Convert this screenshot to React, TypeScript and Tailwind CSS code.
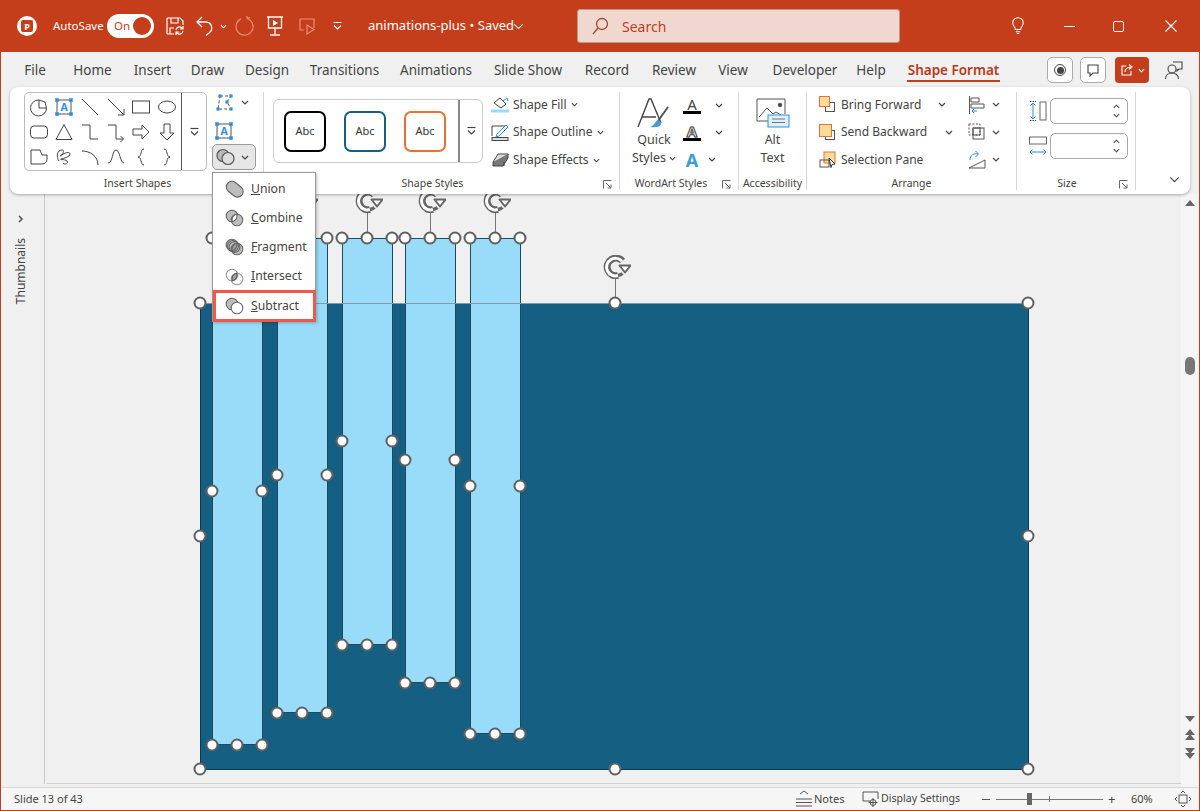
import React from "react";

const S = "#444";
const BL = "#2f8fdc";

function Ic({ w = 20, h = 20, vb, children, className = "" }: { w?: number; h?: number; vb?: string; children: React.ReactNode; className?: string }) {
  return (
    <svg width={w} height={h} viewBox={vb ?? `0 0 ${w} ${h}`} fill="none" stroke={S} strokeWidth={1} className={"shrink-0 " + className}>
      {children}
    </svg>
  );
}

function Chev({ color = "#444", up = false, size = 8 }: { color?: string; up?: boolean; size?: number }) {
  return (
    <svg width={size} height={size > 10 ? 7 : 5} viewBox="0 0 8 5" fill="none" stroke={color} strokeWidth={size > 10 ? 0.8 : 1.2} className="shrink-0">
      <path d={up ? "M1 4l3-3 3 3" : "M1 1l3 3 3-3"} />
    </svg>
  );
}

function GalleryMore() {
  return (
    <svg width={11} height={10} viewBox="0 0 11 10" fill="none" stroke="#444" strokeWidth={1.2}>
      <path d="M1.5 1.5h8" />
      <path d="M2 4.5l3.5 3.5 3.5-3.5" />
    </svg>
  );
}

function Launcher() {
  return (
    <svg width={9} height={9} viewBox="0 0 9 9" fill="none" stroke="#666" strokeWidth={1}>
      <path d="M.5 8.5v-8h8" />
      <path d="M3 3l5 5M8 4.5V8H4.5" />
    </svg>
  );
}

function TextBoxIc({ size = 18 }: { size?: number }) {
  return (
    <svg width={size} height={size} viewBox="0 0 18 18" fill="none" className="shrink-0">
      <rect x="2" y="2" width="14" height="14" stroke="#555" />
      {[[2, 2], [16, 2], [2, 16], [16, 16]].map(([x, y], i) => (
        <rect key={i} x={x - 1.8} y={y - 1.8} width="3.6" height="3.6" fill={BL} />
      ))}
      <text x="9" y="13" textAnchor="middle" fontSize="10.5" fontWeight="700" fill={BL} stroke="none" fontFamily="'Open Sans',sans-serif">A</text>
    </svg>
  );
}

const shapeIcons: React.ReactNode[] = [
  <Ic key="1"><path d="M10 3v8h7.5A8 8 0 1 1 10 3z" /><path d="M10 3l6 2 1.500 6" /></Ic>,
  <TextBoxIc key="2" />,
  <Ic key="3"><path d="M2 2l16 16" /></Ic>,
  <Ic key="4"><path d="M2 2l16 16M18 12v6h-6" /></Ic>,
  <Ic key="5"><rect x="1.5" y="4" width="17" height="12" /></Ic>,
  <Ic key="6"><ellipse cx="10" cy="10" rx="8.5" ry="6" /></Ic>,
  <Ic key="7"><rect x="1.5" y="4" width="17" height="12" rx="3.5" /></Ic>,
  <Ic key="8"><path d="M10 2.5l8 15H2z" /></Ic>,
  <Ic key="9"><path d="M2 3h8v14h8" /></Ic>,
  <Ic key="10"><path d="M2 3h8v14h7M14.5 14l3 3-3 3" /></Ic>,
  <Ic key="11"><path d="M2 7h9V3l7 7-7 7v-4H2z" /></Ic>,
  <Ic key="12"><path d="M7 2h6v9h4l-7 7-7-7h4z" /></Ic>,
  <Ic key="13"><path d="M2 17V3h9l2 5h5v4c0 3-2 5-5 5z" strokeLinejoin="round" /></Ic>,
  <Ic key="14"><path d="M5 14C2 10 3 3 8 3c3 0 1 5-2 6 4-3 10-5 10-2 0 3-6 4-9 5-2 1 4 0 6 2 2 3-3 4-4 2" /></Ic>,
  <Ic key="15"><path d="M2 4c8 0 16 5 16 14" /></Ic>,
  <Ic key="16"><path d="M2 16c5 0 4-13 8-13 4 0 4 13 8 13" /></Ic>,
  <Ic key="17"><path d="M13 2c-4 0-2 8-6 8 4 0 2 8 6 8" /></Ic>,
  <Ic key="18"><path d="M7 2c4 0 2 8 6 8-4 0-2 8-6 8" /></Ic>,
];

function MergeIc() {
  return (
    <svg width={20} height={18} viewBox="0 0 20 18" fill="none" stroke="#555" strokeWidth={1.2} className="shrink-0">
      <circle cx="7" cy="7.5" r="6" fill="#bbb" />
      <circle cx="12" cy="10.5" r="6" fill="#ddd" />
    </svg>
  );
}

function MenuIc({ kind }: { kind: string }) {
  const a = { cx: 7, cy: 7, r: 5.8 };
  const b = { cx: 12, cy: 11, r: 5.8 };
  return (
    <svg width={20} height={18} viewBox="0 0 20 18" fill="none" stroke="#666" strokeWidth={1.1} className="shrink-0">
      {kind === "Union" && <path d="M3 3a5.6 5.6 0 0 1 8 0l5.5 4.5a5.6 5.6 0 0 1-8 8L3 11a5.6 5.6 0 0 1 0-8z" fill="#bdbdbd" />}
      {kind === "Combine" && (<><circle {...a} fill="#bdbdbd" /><circle {...b} fill="#bdbdbd" /><path d="M7.2 12.7a5.8 5.8 0 0 1 4.6-7.4 5.8 5.8 0 0 1-4.6 7.4z" fill="#fff" /></>)}
      {kind === "Fragment" && (<><circle {...a} fill="#bdbdbd" /><circle {...b} fill="#bdbdbd" /><circle cx="9.5" cy="9" r="5.4" /><circle cx="8" cy="8" r="5.5" /><path d="M7.2 12.7a5.8 5.8 0 0 1 4.6-7.4 5.8 5.8 0 0 1-4.6 7.4z" fill="#999" /></>)}
      {kind === "Intersect" && (<><circle {...a} stroke="#999" /><circle {...b} stroke="#999" /><path d="M7.2 12.7a5.8 5.8 0 0 1 4.6-7.4 5.8 5.8 0 0 1-4.6 7.4z" fill="#aaa" stroke="#555" /></>)}
      {kind === "Subtract" && (<><circle {...a} fill="#bdbdbd" /><circle {...b} fill="#fff" /></>)}
    </svg>
  );
}

function Rotate() {
  return (
    <svg width={28} height={24} viewBox="0 0 28 24" fill="none">
      <path d="M19.500 6A8.800 8.800 0 1 0 15 20.500" stroke="#666" strokeWidth={7} />
      <path d="M19 6.300A8.800 8.800 0 1 0 15 20.500" stroke="#fff" strokeWidth={3} />
      <path d="M16.500 10.500h11L22 17.500z" fill="#fff" stroke="#666" strokeWidth={2} strokeLinejoin="round" />
      <path d="M15 20.500a9 9 0 0 0 4.500-2" stroke="#666" strokeWidth={3.500} />
    </svg>
  );
}

function Handle({ x, y }: { x: number; y: number }) {
  return <div className="absolute w-[13px] h-[13px] rounded-full bg-white border-2 border-[#5f5f5f] -translate-x-1/2 -translate-y-1/2" style={{ left: x - 0.5, top: y - 0.5 }} />;
}

const bars = [
  { l: 212, b: 745, m: 491 },
  { l: 277, b: 713, m: 475 },
  { l: 342, b: 645, m: 441 },
  { l: 405, b: 683, m: 460 },
  { l: 470, b: 734, m: 486 },
];

function Canvas() {
  return (
    <div className="absolute left-[-1px] top-[-194px] w-[1200px] h-[811px]">
      <div className="absolute left-[200px] top-[303px] w-[829px] h-[467px] bg-[#156082] border border-[#0d3a4e]" />
      {bars.map((b) => (
        <div
          key={b.l}
          className="absolute w-[51px] bg-[#99dcfa] border border-[#1d4a5e] rounded-[7px]"
          style={{ left: b.l, top: 238, height: b.b - 238 }}
        />
      ))}
      <div className="absolute left-[200px] top-[303px] w-[828px] h-px bg-[#7f9aa6]" />
      {bars.map((b) => (
        <React.Fragment key={b.l}>
          <div className="absolute w-px bg-[#777] h-[30px]" style={{ left: b.l + 25, top: 208 }} />
          <div className="absolute" style={{ left: b.l + 13, top: 189 }}><Rotate /></div>
          {[b.l, b.l + 25, b.l + 50].map((x) => (
            <Handle key={x} x={x} y={238} />
          ))}
          <Handle x={b.l} y={b.m} />
          <Handle x={b.l + 50} y={b.m} />
          {[b.l, b.l + 25, b.l + 50].map((x) => (
            <Handle key={x} x={x} y={b.b} />
          ))}
        </React.Fragment>
      ))}
      <div className="absolute left-[615px] top-[277px] w-px h-[26px] bg-[#777]" />
      <div className="absolute left-[603px] top-[255px]"><Rotate /></div>
      {[200, 615, 1028].map((x) => <Handle key={x} x={x} y={303} />)}
      {[200, 1028].map((x) => <Handle key={x} x={x} y={536} />)}
      {[200, 615, 1028].map((x) => <Handle key={x} x={x} y={769} />)}
    </div>
  );
}

const tabs: [string, string][] = [
  ["File", "ml-[23px] w-[22px]"],
  ["Home", "ml-[27px] w-[39px]"],
  ["Insert", "ml-[22px] w-[37px]"],
  ["Draw", "ml-[20px] w-[33px]"],
  ["Design", "ml-[21px] w-[44px]"],
  ["Transitions", "ml-[20px] w-[71px]"],
  ["Animations", "ml-[19px] w-[74px]"],
  ["Slide Show", "ml-[19px] w-[72px]"],
  ["Record", "ml-[20px] w-[46px]"],
  ["Review", "ml-[21px] w-[46px]"],
  ["View", "ml-[20px] w-[32px]"],
  ["Developer", "ml-[20px] w-[72px]"],
  ["Help", "ml-[15px] w-[30px]"],
];

function Row({ children, className = "" }: { children: React.ReactNode; className?: string }) {
  return <div className={"flex items-center " + className}>{children}</div>;
}

function GroupLabel({ children, launcher, className = "" }: { children: React.ReactNode; launcher?: boolean; className?: string }) {
  return (
    <div className={"relative h-[14px] flex items-center justify-center text-[10.5px] text-[#444] whitespace-nowrap " + className}>
      {children}
      {launcher && <span className="absolute right-[7px] top-[3px] flex"><Launcher /></span>}
    </div>
  );
}

function Group({ className, children }: { className: string; children: React.ReactNode }) {
  return <div className={"flex flex-col h-[98px] shrink-0 [&>*]:shrink-0 " + className}>{children}</div>;
}

function Stepper({ className = "" }: { className?: string }) {
  return (
    <div className={"w-[78px] h-[26px] rounded-[5px] border border-[#aaa] bg-white flex flex-col items-end justify-center gap-[4px] pr-[7px] " + className}>
      <Chev up size={7} />
      <Chev size={7} />
    </div>
  );
}

function Menu() {
  const items: [string, string, string][] = [
    ["Union", "U", "nion"],
    ["Combine", "C", "ombine"],
    ["Fragment", "F", "ragment"],
    ["Intersect", "I", "ntersect"],
  ];
  return (
    <div className="absolute left-[212px] top-[172px] z-20 w-[104px] h-[150px] bg-white border border-[#999] shadow-[1px_1px_3px_rgba(0,0,0,0.25)] text-[12.2px] text-[#444]">
      <div className="pt-[1px]">
        {items.map(([k, u, r]) => (
          <div key={k} className="h-[29.3px] flex items-center pl-[12px] gap-[6px]">
            <MenuIc kind={k} />
            <span><span className="underline">{u}</span>{r}</span>
          </div>
        ))}
      </div>
      <div className="absolute left-0 top-[117px] w-[103px] h-[32px] border-[3px] border-[#f0594a] flex items-center pl-[9px] gap-[6px]">
        <MenuIc kind="Subtract" />
        <span><span className="underline">S</span>ubtract</span>
      </div>
    </div>
  );
}

export default function App() {
  return (
    <div className="relative w-[1200px] h-[811px] overflow-hidden bg-[#c43e1c] px-[1px] pb-[1px] flex flex-col font-['Open_Sans',sans-serif] text-[#444]">
      {/* Title bar */}
      <div className="h-[52px] shrink-0 flex items-center text-white">
        <div className="relative ml-[16px] w-[20px] h-[20px] rounded-full bg-white flex items-center justify-center shrink-0">
          <span className="w-[12px] h-[12px] rounded-[2px] bg-[#c43e1c] flex items-center justify-center text-white text-[9px] font-bold leading-none">P</span>
        </div>
        <span className="ml-[16px] text-[11.5px] w-[47px] whitespace-nowrap">AutoSave</span>
        <div className="ml-[7px] w-[47px] h-[24px] rounded-full bg-white flex items-center justify-between pl-[7px] pr-[3px]">
          <span className="text-[#c43e1c] text-[11.5px]">On</span>
          <span className="w-[18px] h-[18px] rounded-full bg-[#c43e1c]" />
        </div>
        <svg width={20} height={20} viewBox="0 0 20 20" fill="none" stroke="#fff" strokeWidth={1.2} className="ml-[11px] shrink-0">
          <path d="M9 18H3a1 1 0 0 1-1-1V3a1 1 0 0 1 1-1h12l3 3v4" />
          <path d="M6 2v5h7V2M5 18v-6h4" />
          <path d="M11 14a3.5 3.5 0 0 1 6-2l1 1M18 15a3.5 3.5 0 0 1-6 2l-1-1M18 10v3h-3M11 19v-3h3" />
        </svg>
        <svg width={22} height={22} viewBox="0 0 22 22" fill="none" stroke="#fff" strokeWidth={1.3} className="ml-[9px] shrink-0">
          <path d="M8 2L3 7l5 5" />
          <path d="M3 7h9a6 6 0 0 1 3 11l-3 2.5" />
        </svg>
        <span className="ml-[4px]"><Chev color="#fff" size={7} /></span>
        <svg width={22} height={22} viewBox="0 0 22 22" fill="none" stroke="#e98d75" strokeWidth={1.2} className="ml-[7px] shrink-0">
          <path d="M13 3.5a8.5 8.5 0 1 1-6 .4M13 3.5V1M13 3.5l3-1" />
        </svg>
        <svg width={20} height={22} viewBox="0 0 20 22" fill="none" stroke="#fff" strokeWidth={1.3} className="ml-[9px] shrink-0">
          <path d="M2 2h16M3.5 2v11h13V2M10 13v6M5 20h10" />
          <path d="M8 5l5 3-5 3z" fill="#fff" stroke="none" />
        </svg>
        <svg width={20} height={20} viewBox="0 0 20 20" fill="none" stroke="#e98d75" strokeWidth={1.2} className="ml-[12px] shrink-0">
          <path d="M7 14H3V3h14v9" />
          <path d="M10 9l7 4.5-7 4.5z" />
        </svg>
        <svg width={11} height={10} viewBox="0 0 11 10" fill="none" stroke="#fff" strokeWidth={1.1} className="ml-[15px] shrink-0">
          <path d="M1.5 1.5h8M2 4.5l3.5 3.5L9 4.5" />
        </svg>
        <span className="ml-[25px] text-[13px] whitespace-nowrap w-[146px]">animations-plus • Saved</span>
        <span className="-ml-[1px] w-[12px]"><Chev color="#fff" size={11} /></span>
        <div className="ml-[52px] w-[323px] h-[34px] rounded-[3px] bg-[#f0d8d1] border border-[#b99a90] flex items-center pl-[12px] text-[#c43e1c]">
          <svg width={20} height={20} viewBox="0 0 20 20" fill="none" stroke="#a8452c" strokeWidth={1.3} className="shrink-0">
            <circle cx="12" cy="8" r="5.5" />
            <path d="M8 12l-5 6" />
          </svg>
          <span className="ml-[12px] text-[14px]">Search</span>
        </div>
        <svg width={14} height={18} viewBox="0 0 16 20" fill="none" stroke="#fff" strokeWidth={1.2} className="ml-[111px] shrink-0">
          <path d="M5 14c0-3-3-4-3-7.500a6 6 0 0 1 12 0C14 10 11 11 11 14zM5.500 16.500h5M6.500 18.500h3" />
        </svg>
        <div className="ml-[39px] w-[11px] h-px bg-white" />
        <div className="ml-[38px] w-[11px] h-[11px] border border-white rounded-[2px]" />
        <svg width={12} height={12} viewBox="0 0 12 12" stroke="#fff" strokeWidth={1.1} className="ml-[41px] shrink-0">
          <path d="M.5.5l11 11M11.500.5l-11 11" />
        </svg>
      </div>

      <div className="flex-1 min-h-0 bg-[#f0f0f0] flex flex-col">
        {/* Tabs */}
        <div className="h-[35px] shrink-0 flex items-center text-[13.5px] text-[#444] pt-[1px]">
          {tabs.map(([t, c]) => (
            <span key={t} className={"flex justify-center whitespace-nowrap " + c}>{t}</span>
          ))}
          <span className="relative ml-[21px] w-[93px] flex justify-center whitespace-nowrap font-semibold text-[#b7391a]">
            Shape Format
            <span className="absolute left-0 right-0 top-[20px] h-[2.5px] bg-[#c43e1c]" />
          </span>
          <div className="ml-[47px] w-[26px] h-[26px] rounded-[5px] bg-white border border-[#aaa] flex items-center justify-center">
            <span className="w-[12px] h-[12px] rounded-full border border-[#444] flex items-center justify-center">
              <span className="w-[7px] h-[7px] rounded-full bg-[#444]" />
            </span>
          </div>
          <div className="ml-[7px] w-[26px] h-[26px] rounded-[5px] bg-white border border-[#aaa] flex items-center justify-center">
            <svg width={14} height={14} viewBox="0 0 14 14" fill="none" stroke="#444" strokeWidth={1.1}>
              <path d="M2 2h10v8H7l-3 3v-3H2z" />
            </svg>
          </div>
          <div className="ml-[9px] w-[34px] h-[26px] rounded-[4px] bg-[#c43e1c] flex items-center justify-center gap-[4px]">
            <svg width={14} height={14} viewBox="0 0 14 14" fill="none" stroke="#fff" strokeWidth={1.1}>
              <path d="M6 3H2v9h9V8M5 9c0-3 2-5 6-5M9 1.500l3 2.500-3 2.500" />
            </svg>
            <Chev color="#fff" size={7} />
          </div>
          <svg width={20} height={20} viewBox="0 0 20 20" fill="none" stroke="#444" strokeWidth={1.1} className="ml-[15px] shrink-0">
            <circle cx="8" cy="9" r="4" />
            <path d="M1.500 19c0-4 3-6 6.500-6s6.500 2 6.500 6" />
            <path d="M9 2h9v7h-3l-2 2V9" />
          </svg>
        </div>

        {/* Ribbon */}
        <div className="relative z-10 mx-[9px] h-[107px] shrink-0 rounded-[8px] bg-white shadow-[0_1px_3px_rgba(0,0,0,0.3)] flex pt-[5px]">
          {/* Insert Shapes */}
          <Group className="w-[254px] border-r border-[#d8d8d8]">
            <div className="h-[85px] pl-[14px] flex items-start">
              <div className="w-[183px] h-[79px] rounded-[5px] border border-[#bbb] flex">
                <div className="w-[156px] grid grid-cols-6 grid-rows-3 pl-[1px] pr-[1px] py-[1px]">
                  {shapeIcons.map((ic, i) => (
                    <span key={i} className="flex items-center justify-center">{ic}</span>
                  ))}
                </div>
                <div className="flex-1 border-l border-[#555] rounded-r-[5px] flex items-center justify-center"><GalleryMore /></div>
              </div>
              <div className="ml-[5px] w-[45px] flex flex-col">
                <Row className="h-[23px] pl-[4px] gap-[6px] -mt-[1px]">
                  <svg width={19} height={17} viewBox="0 0 19 17" fill="none" className="shrink-0">
                    <path d="M4 2h11l-4 6 4 7H2z" stroke="#555" strokeDasharray="3 2" />
                    {[[4, 2], [15, 2], [2, 15], [15, 15], [11, 8]].map(([x, y], i) => (
                      <rect key={i} x={x - 1.6} y={y - 1.6} width="3.200" height="3.200" fill={BL} />
                    ))}
                  </svg>
                  <Chev />
                </Row>
                <Row className="h-[34px] pl-[3px]"><TextBoxIc size={18} /></Row>
                <Row className="h-[26px] -mt-[4px] w-[44px] rounded-[5px] bg-[#e6e6e6] border border-[#999] pl-[3px] gap-[5px]">
                  <MergeIc />
                  <Chev />
                </Row>
              </div>
            </div>
            <GroupLabel className="pl-[2px]">Insert Shapes</GroupLabel>
          </Group>

          {/* Shape Styles */}
          <Group className="w-[356px] border-r border-[#d8d8d8]">
            <div className="h-[85px] pl-[9px] flex items-start">
              <div className="mt-[7px] w-[210px] h-[64px] rounded-[6px] border border-[#ccc] flex">
                <div className="w-[184px] flex items-center pl-[10px]">
                  <div className="w-[42px] h-[41px] rounded-[7px] border-2 border-black flex items-center justify-center text-[11px] text-[#333]">Abc</div>
                  <div className="ml-[18px] w-[42px] h-[41px] rounded-[7px] border-2 border-[#156082] flex items-center justify-center text-[11px] text-[#333]">Abc</div>
                  <div className="ml-[18px] w-[42px] h-[41px] rounded-[7px] border-2 border-[#e97132] flex items-center justify-center text-[11px] text-[#333]">Abc</div>
                </div>
                <div className="flex-1 border-l-2 border-[#888] rounded-r-[6px] flex items-center justify-center"><GalleryMore /></div>
              </div>
              <div className="ml-[8px] -mt-[1px] flex flex-col">
                <div className="flex items-center h-[27px] text-[12px] whitespace-nowrap">
                  <svg width={19} height={17} viewBox="0 0 19 17" fill="none" stroke="#444" className="shrink-0">
                    <path d="M3 7l6-5 6 6-5 4z" />
                    <path d="M12 5l4-3 1 3" stroke={BL} />
                    <rect x="0" y="13.500" width="18" height="3" fill="#99dcfa" stroke="none" />
                  </svg>
                  <span className="ml-[3px]">Shape Fill</span>
                  <span className="ml-[4px]"><Chev size={7} /></span>
                </div>
                <div className="flex items-center h-[28px] text-[12px] whitespace-nowrap">
                  <svg width={19} height={17} viewBox="0 0 19 17" fill="none" stroke="#444" className="shrink-0">
                    <path d="M1 12V2h13" />
                    <path d="M6 10l9-9 2 2-9 9-3 1z" stroke={BL} />
                    <rect x="1" y="13.500" width="16" height="3" fill="#ddd" />
                  </svg>
                  <span className="ml-[3px]">Shape Outline</span>
                  <span className="ml-[4px]"><Chev size={7} /></span>
                </div>
                <div className="flex items-center h-[28px] text-[12px] whitespace-nowrap">
                  <svg width={19} height={17} viewBox="0 0 19 17" fill="none" stroke="#444" className="shrink-0">
                    <path d="M7 2h10l-4 8H2z" fill="#ddd" />
                    <path d="M2 10v4h10l5-8V2M13 10v4" fill="#777" />
                  </svg>
                  <span className="ml-[3px]">Shape Effects</span>
                  <span className="ml-[4px]"><Chev size={7} /></span>
                </div>
              </div>
            </div>
            <GroupLabel launcher className="pr-[18px]">Shape Styles</GroupLabel>
          </Group>

          {/* WordArt */}
          <Group className="w-[119px] border-r border-[#d8d8d8]">
            <div className="h-[85px] flex">
              <div className="w-[56px] ml-[6px] flex flex-col items-center pt-[5px] text-[12.5px] leading-[18px]">
                <svg width={36} height={32} viewBox="0 0 36 32" fill="none" className="shrink-0 mb-[2px]">
                  <path d="M2 30L13 2h2l10 24M6 20h14" stroke="#444" strokeWidth={1.4} />
                  <path d="M32 10L22 24" stroke="#555" strokeWidth={2} />
                  <path d="M22 23c-3 1-3 5-8 7 5 1 12 0 11-5z" fill="#4a9ad8" />
                </svg>
                <span>Quick</span>
                <span className="flex items-center gap-[3px]">Styles <Chev size={7} /></span>
              </div>
              <div className="ml-[1px] flex flex-col">
                <div className="flex items-center h-[27px]">
                  <div className="w-[18px] flex flex-col items-center text-[15px] leading-[14px]">A<span className="w-[18px] h-[3px] bg-black" /></div>
                  <span className="ml-[14px]"><Chev /></span>
                </div>
                <div className="flex items-center h-[27px]">
                  <div className="w-[18px] flex flex-col items-center text-[15px] leading-[14px] font-bold text-[#eee] [-webkit-text-stroke:1px_#444]">A<span className="w-[18px] h-[3px] bg-black" /></div>
                  <span className="ml-[14px]"><Chev /></span>
                </div>
                <div className="flex items-center h-[27px]">
                  <div className="w-[18px] flex justify-center text-[18px] leading-none font-bold text-[#3b9be0]">A</div>
                  <span className="ml-[7px]"><Chev /></span>
                </div>
              </div>
            </div>
            <GroupLabel launcher className="pr-[16px]">WordArt Styles</GroupLabel>
          </Group>

          {/* Accessibility */}
          <Group className="w-[68px] border-r border-[#d8d8d8]">
            <div className="h-[85px] flex flex-col items-center pt-[6px] text-[12.5px] leading-[18px]">
              <svg width={34} height={30} viewBox="0 0 34 30" fill="none" stroke="#555" className="shrink-0 mb-[1px]">
                <path d="M13 23H1V1h28v15" />
                <path d="M3 19l8-9 6 6 3-2 5 3" />
                <circle cx="24" cy="7" r="1.800" fill="#444" />
                <rect x="12" y="17" width="21" height="12" fill="#dff0fb" stroke={BL} />
                <path d="M16 21h13M16 24.500h13" stroke="#777" />
              </svg>
              <span className="mt-[2px]">Alt</span>
              <span>Text</span>
            </div>
            <GroupLabel>Accessibility</GroupLabel>
          </Group>

          {/* Arrange */}
          <Group className="w-[210px] border-r border-[#d8d8d8]">
            <div className="h-[85px] flex pl-[12px]">
              <div className="flex flex-col w-[142px] -mt-[1px]">
                {[
                  ["Bring Forward", "-ml-[7px]", "w-[11px] h-[11px] bg-[#fbdc9b] border-[#e97132] left-0 top-0", "w-[10px] h-[10px] border-[#555] left-[6px] top-[6px]"],
                  ["Send Backward", "ml-0", "w-[13px] h-[13px] bg-[#fbdc9b] border-[#e97132] left-0 top-0", "w-[10px] h-[10px] bg-white border-[#555] left-[6px] top-[6px]"],
                ].map(([t, ml, a, b]) => (
                  <div key={t} className="flex items-center h-[27.500px] text-[12px] whitespace-nowrap">
                    <span className="relative w-[17px] h-[17px] shrink-0">
                      <span className={"absolute border " + b} />
                      <span className={"absolute border " + a} />
                    </span>
                    <span className="ml-[5px] w-[104px]">{t}</span>
                    <span className={ml}><Chev /></span>
                  </div>
                ))}
                <div className="flex items-center h-[27px] text-[12px] whitespace-nowrap">
                  <svg width={17} height={17} viewBox="0 0 17 17" fill="none" className="shrink-0">
                    <rect x="5" y="1" width="11" height="11" fill="#fbdc9b" stroke="#e97132" />
                    <rect x="1" y="9" width="9" height="7" stroke="#555" />
                    <path d="M10 7l6 6-3 .5-1 3z" fill="#fff" stroke="#333" />
                  </svg>
                  <span className="ml-[5px]">Selection Pane</span>
                </div>
              </div>
              <div className="ml-[7px] -mt-[1px] flex flex-col">
                <div className="flex items-center h-[27.500px] gap-[6px]">
                  <svg width={18} height={18} viewBox="0 0 18 18" fill="none" stroke="#555" className="shrink-0">
                    <path d="M1.500 0v18M3 2h8v4H3zM3 8h13v4H3z" />
                    <path d="M9 15H4M6 13l-2 2 2 2" stroke={BL} />
                  </svg>
                  <Chev />
                </div>
                <div className="flex items-center h-[27.500px] gap-[6px]">
                  <svg width={18} height={18} viewBox="0 0 18 18" fill="none" stroke="#555" className="shrink-0">
                    <rect x="1" y="1" width="11" height="11" strokeDasharray="2 1.500" />
                    <rect x="5" y="5" width="11" height="11" />
                    <path d="M5 5h7v7H5z" stroke="#555" />
                  </svg>
                  <Chev />
                </div>
                <div className="flex items-center h-[27px] gap-[6px]">
                  <svg width={18} height={18} viewBox="0 0 18 18" fill="none" stroke="#555" className="shrink-0">
                    <path d="M1 17l16-8v8z" />
                    <path d="M2 9c0-5 4-7 8-6M7.500 0l3 3-3 3" stroke={BL} />
                  </svg>
                  <Chev />
                </div>
              </div>
            </div>
            <GroupLabel>Arrange</GroupLabel>
          </Group>

          {/* Size */}
          <Group className="w-[119px] border-r border-[#d8d8d8]">
            <div className="h-[85px] flex flex-col pl-[12px] pt-[6px] gap-[9px]">
              <div className="flex items-center gap-[3px]">
                <svg width={18} height={22} viewBox="0 0 18 22" fill="none" className="shrink-0">
                  <rect x="11" y="2" width="6" height="18" stroke="#666" />
                  <path d="M4 3v16M1.500 5.500L4 3l2.500 2.500M1.500 16.500L4 19l2.500-2.500" stroke={BL} />
                  <path d="M1 1.500h6M1 20.500h6" stroke="#444" strokeDasharray="1.500 1" />
                </svg>
                <Stepper />
              </div>
              <div className="flex items-center gap-[3px]">
                <svg width={18} height={22} viewBox="0 0 18 22" fill="none" className="shrink-0">
                  <rect x="0.500" y="2" width="17" height="7" stroke="#666" />
                  <path d="M1 17h16M3.500 14.500L1 17l2.500 2.500M14.500 14.500L17 17l-2.500 2.500" stroke={BL} />
                </svg>
                <Stepper />
              </div>
            </div>
            <GroupLabel launcher className="pr-[18px]">Size</GroupLabel>
          </Group>

          <div className="flex-1 flex items-end justify-end pr-[9px] pb-[11px]">
            <Chev size={13} />
          </div>
        </div>

        {/* Workspace */}
        <div className="flex-1 min-h-0 relative overflow-hidden flex">
          <div className="w-[44px] mb-[3px] border-r border-[#c8c8c8] flex flex-col items-center pt-[21px] pr-[3px]">
            <svg width={6} height={8} viewBox="0 0 6 8" fill="none" stroke="#555" strokeWidth={1.600}>
              <path d="M1 1l3 3-3 3" />
            </svg>
            <span className="mt-[15px] text-[12px] leading-none [writing-mode:vertical-rl] rotate-180">Thumbnails</span>
          </div>
          <div className="flex-1 ml-[2px] mb-[3px] border-b border-[#cfcfcf]" />
          <div className="w-[18px] bg-[#f5f5f5] flex flex-col items-center relative">
            <svg width={10} height={6} viewBox="0 0 10 6" className="mt-[6px]"><path d="M5 0l5 6H0z" fill="#666" /></svg>
            <div className="mt-[151px] w-[10px] h-[18px] rounded-full bg-[#777]" />
            <svg width={10} height={6} viewBox="0 0 10 6" className="mt-[341px]"><path d="M5 6l5-6H0z" fill="#666" /></svg>
            <svg width={10} height={12} viewBox="0 0 10 12" className="mt-[7px]"><path d="M5 0l5 6H0zM5 5l5 6H0z" fill="#666" /></svg>
            <svg width={10} height={12} viewBox="0 0 10 12" className="mt-[6px]"><path d="M5 12l5-6H0zM5 7l5-6H0z" fill="#666" /></svg>
          </div>
          <Canvas />
        </div>

        {/* Status bar */}
        <div className="h-[23px] shrink-0 bg-[#f6f6f6] border-t border-[#d8d8d8] flex items-center text-[11px] text-[#444]">
          <span className="ml-[13px] w-[80px] whitespace-nowrap">Slide 13 of 43</span>
          <svg width={18} height={18} viewBox="0 0 18 18" fill="none" stroke="#555" className="ml-[701px] shrink-0">
            <path d="M5 4l4-3 4 3M1 9h16M1 12.500h16M1 16h16" />
          </svg>
          <span className="ml-[1px] w-[48px]">Notes</span>
          <svg width={18} height={18} viewBox="0 0 18 18" fill="none" stroke="#555" className="shrink-0">
            <path d="M8 11H1V2h15v7" />
            <circle cx="11" cy="12.500" r="3" />
            <path d="M11 8v9M6.500 12.500h9" />
          </svg>
          <span className="ml-[1px] w-[101px] whitespace-nowrap text-[10.6px]">Display Settings</span>
          <span className="w-[8px] h-px bg-[#555]" />
          <div className="relative ml-[6px] w-[107px] h-[12px] flex items-center">
            <span className="w-full h-px bg-[#777]" />
            <span className="absolute left-[31px] top-0 w-[5px] h-[12px] bg-[#666]" />
            <span className="absolute left-[53px] top-[3px] w-px h-[6px] bg-[#777]" />
          </div>
          <span className="ml-[5px] text-[13px] leading-none w-[10px]">+</span>
          <span className="ml-[13px] w-[30px] whitespace-nowrap">60%</span>
          <svg width={18} height={18} viewBox="0 0 18 18" fill="none" stroke="#555" className="ml-[13px] shrink-0">
            <rect x="5" y="5" width="8" height="8" />
            <path d="M7 3l2-2 2 2M7 15l2 2 2-2M3 7L1 9l2 2M15 7l2 2-2 2" />
          </svg>
        </div>
      </div>

      <Menu />
    </div>
  );
}
